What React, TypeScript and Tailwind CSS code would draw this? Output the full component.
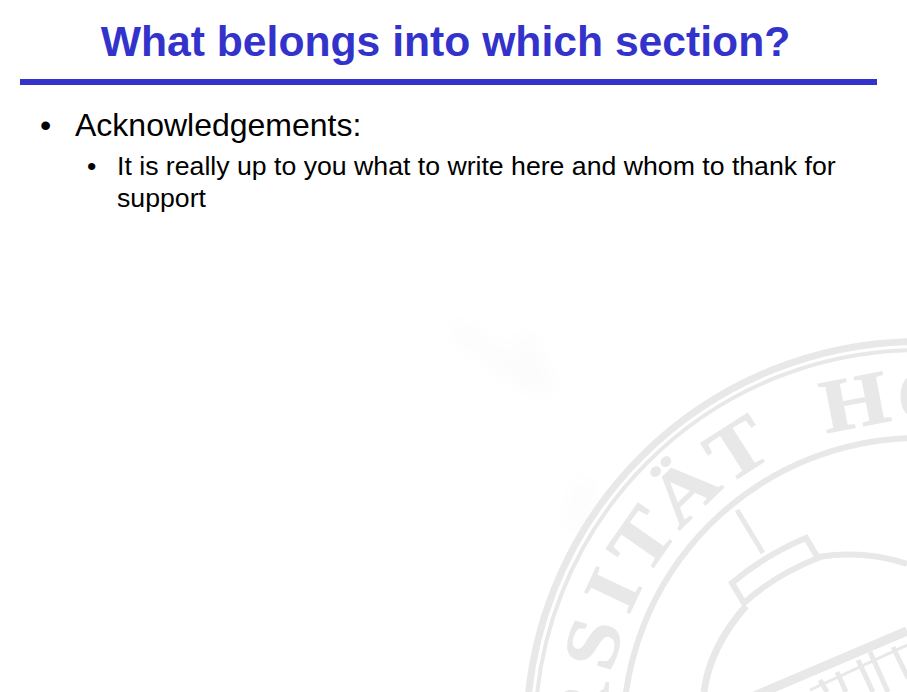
const letters = [
  { ch: "R", angle: -86.5 },
  { ch: "S", angle: -74.5 },
  { ch: "I", angle: -64.8 },
  { ch: "T", angle: -55 },
  { ch: "Ä", angle: -44 },
  { ch: "T", angle: -32.5 },
  { ch: "H", angle: -11 },
  { ch: "O", angle: 2 },
];

// faded university seal behind the slide
function Seal() {
  return (
    <svg
      className="absolute inset-0 h-full w-full"
      viewBox="0 0 907 692"
      fill="none"
      stroke="#e8e8e8"
      aria-hidden="true"
    >
      <defs>
        <filter id="smudge">
          <feGaussianBlur stdDeviation="9" />
        </filter>
      </defs>
      <g stroke="#fcfcfc" strokeWidth="20" filter="url(#smudge)">
        <path d="M452 325 L535 385" />
        <path d="M522 335 L548 395" />
        <path d="M585 480 L575 530" />
      </g>
      <circle cx="919" cy="734" r="392.5" strokeWidth="7" />
      <circle cx="919" cy="734" r="384" strokeWidth="4" />
      <circle cx="919" cy="734" r="296" strokeWidth="6" />
      {letters.map((l) => (
        <text
          key={l.ch + l.angle}
          textAnchor="middle"
          fontFamily="'Liberation Serif', serif"
          fontSize="76"
          fontWeight="700"
          fill="#e8e8e8"
          stroke="#e8e8e8"
          strokeWidth="1"
          transform={`rotate(${l.angle} 919 734) translate(919 421) scale(1.15 1)`}
        >
          {l.ch}
        </text>
      ))}
      <path d="M737 510 L763 553" strokeWidth="5" />
      <path d="M806 538 Q765 555 732 583 L744 603 Q775 575 818 558 Z" strokeWidth="6" />
      <path d="M818 557 C850 552 880 555 907 564" strokeWidth="6" />
      <path d="M746 606 C725 630 708 660 704 692" strokeWidth="7" />
      <path d="M745 700 L907 631" strokeWidth="9" />
      <path d="M810 690 L907 645" strokeWidth="3" />
      <path
        d="M820 680 L827 692 M837 672 L846 692 M858 660 L873 692 M870 652 L888 692 M893 647 L908 678"
        strokeWidth="5"
      />
    </svg>
  );
}

export default function App() {
  return (
    <div className="relative h-[692px] w-[907px] overflow-hidden bg-white font-['Liberation_Sans',Arial,sans-serif] text-black">
      <Seal />
      <div className="relative">
        <h1 className="pt-[15px] pr-4 text-center text-[42.67px] leading-[52px] font-bold text-[#3333cc]">
          What belongs into which section?
        </h1>
        <div className="mx-5 mt-3 h-[6px] w-[857px] bg-[#3333cc]" />
        <ul className="mt-5 pl-10">
          <li className="flex text-[32px] leading-[40px]">
            <span className="w-[35px]">•</span>
            <span>Acknowledgements:</span>
          </li>
          <li className="mt-[5px] ml-[47px] flex text-[26.67px] leading-[32px]">
            <span className="w-[30px] shrink-0">•</span>
            <span className="w-[730px]">
              It is really up to you what to write here and whom to thank for support
            </span>
          </li>
        </ul>
      </div>
    </div>
  );
}
